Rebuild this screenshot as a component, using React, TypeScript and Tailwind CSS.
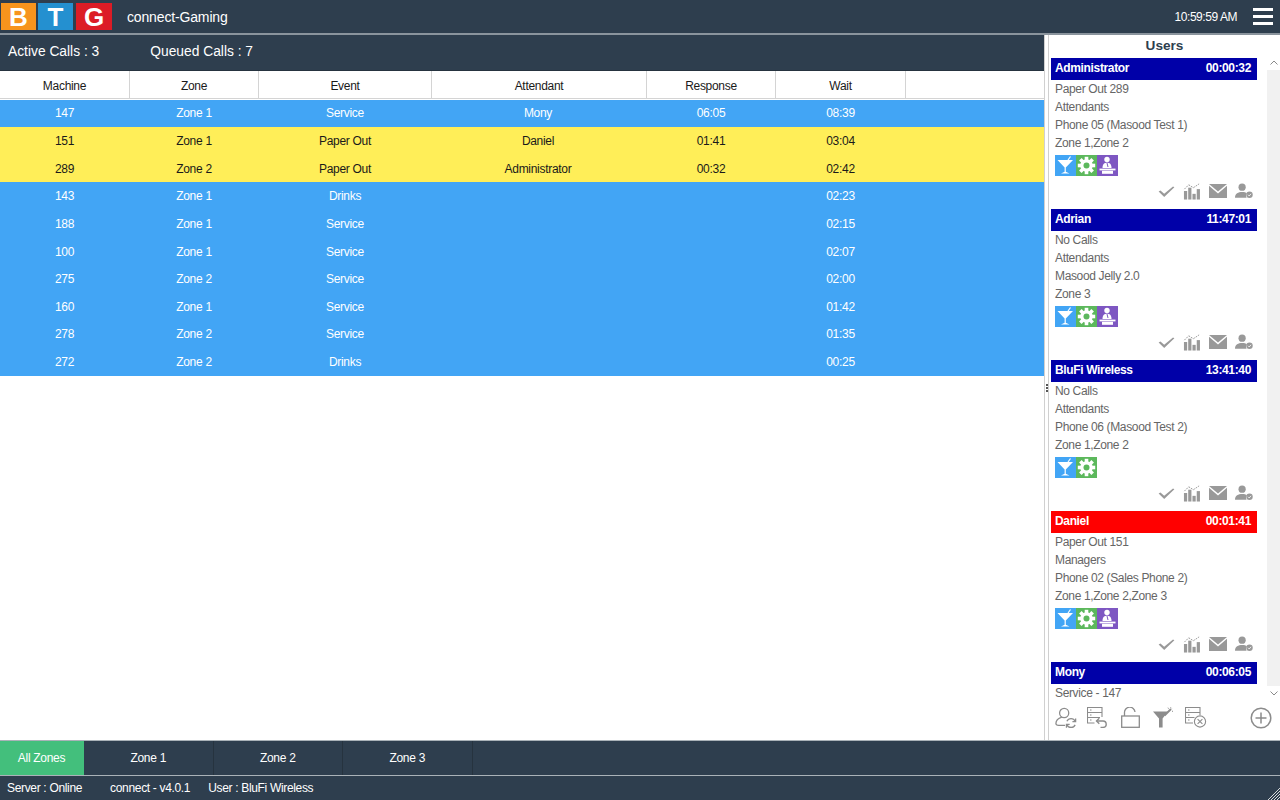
import React from "react";

const columns = [
  { label: "Machine", w: "w-[130px]" },
  { label: "Zone", w: "w-[129px]" },
  { label: "Event", w: "w-[173px]" },
  { label: "Attendant", w: "w-[215px]" },
  { label: "Response", w: "w-[129px]" },
  { label: "Wait", w: "w-[130px]" },
];

const rows = [
  ["147", "Zone 1", "Service", "Mony", "06:05", "08:39", "b"],
  ["151", "Zone 1", "Paper Out", "Daniel", "01:41", "03:04", "y"],
  ["289", "Zone 2", "Paper Out", "Administrator", "00:32", "02:42", "y"],
  ["143", "Zone 1", "Drinks", "", "", "02:23", "b"],
  ["188", "Zone 1", "Service", "", "", "02:15", "b"],
  ["100", "Zone 1", "Service", "", "", "02:07", "b"],
  ["275", "Zone 2", "Service", "", "", "02:00", "b"],
  ["160", "Zone 1", "Service", "", "", "01:42", "b"],
  ["278", "Zone 2", "Service", "", "", "01:35", "b"],
  ["272", "Zone 2", "Drinks", "", "", "00:25", "b"],
];

const users = [
  { name: "Administrator", time: "00:00:32", color: "bg-[#0000a8]", lines: ["Paper Out 289", "Attendants", "Phone 05 (Masood Test 1)", "Zone 1,Zone 2"], badges: 3 },
  { name: "Adrian", time: "11:47:01", color: "bg-[#0000a8]", lines: ["No Calls", "Attendants", "Masood Jelly 2.0", "Zone 3"], badges: 3 },
  { name: "BluFi Wireless", time: "13:41:40", color: "bg-[#0000a8]", lines: ["No Calls", "Attendants", "Phone 06 (Masood Test 2)", "Zone 1,Zone 2"], badges: 2 },
  { name: "Daniel", time: "00:01:41", color: "bg-[#ff0000]", lines: ["Paper Out 151", "Managers", "Phone 02 (Sales Phone 2)", "Zone 1,Zone 2,Zone 3"], badges: 3 },
  { name: "Mony", time: "00:06:05", color: "bg-[#0000a8]", lines: ["Service - 147"], badges: 0 },
];

function Cocktail() {
  return (
    <svg viewBox="0 0 21 21" className="h-[21px] w-[21px]">
      <path d="M2.5 5 L18 5 L10.8 12.5 L10.8 16.8 L14.5 18.6 L6 18.6 L9.6 16.8 L9.6 12.5 Z" fill="#fff" />
      <path d="M13 5 L15.5 1.5" stroke="#fff" strokeWidth="1.2" />
    </svg>
  );
}

function Gear() {
  const teeth = [0, 45, 90, 135, 180, 225, 270, 315];
  return (
    <svg viewBox="0 0 21 21" className="h-[21px] w-[21px]">
      {teeth.map((a) => (
        <rect key={a} x="8.7" y="1.8" width="3.6" height="4" fill="#fff" transform={`rotate(${a} 10.5 10.5)`} />
      ))}
      <circle cx="10.5" cy="10.5" r="6.2" fill="#fff" />
      <circle cx="10.5" cy="10.5" r="3" fill="#5cb85c" />
    </svg>
  );
}

function Attendant() {
  return (
    <svg viewBox="0 0 21 21" className="h-[21px] w-[21px]">
      <circle cx="10" cy="4.5" r="2.7" fill="#fff" />
      <path d="M5.5 13 C5.5 9 7.5 7.8 10 7.8 C12.5 7.8 14.5 9 14.5 13 Z" fill="#fff" />
      <path d="M10 8 L11 12" stroke="#7e57c2" strokeWidth="1" />
      <rect x="2.5" y="13.6" width="16" height="1.8" fill="#fff" />
      <rect x="5" y="15.8" width="11" height="3" fill="#fff" />
    </svg>
  );
}

function CheckIcon() {
  return (
    <svg viewBox="0 0 18 14" className="h-[13px] w-[17px]">
      <path d="M0.5 7 L2.5 5.8 L6.5 9.3 L16 1.5 L17.5 2.3 L6.5 13 Z" fill="#999999" />
    </svg>
  );
}

function ChartIcon() {
  return (
    <svg viewBox="0 0 19 18" className="h-[18px] w-[18px]">
      <path d="M1.5 7 L6 2.5 L11 5.5 L17 1.5" stroke="#999999" strokeWidth="1" strokeDasharray="2 1" fill="none" />
      <rect x="1" y="9" width="3.4" height="9" fill="#999999" />
      <rect x="5.5" y="5.5" width="3.4" height="12.5" fill="#999999" />
      <rect x="10" y="12" width="3.4" height="6" fill="#999999" />
      <rect x="14.5" y="7" width="3.4" height="11" fill="#999999" />
    </svg>
  );
}

function MailIcon() {
  return (
    <svg viewBox="0 0 18 14" className="h-[14px] w-[18px]">
      <path d="M0 0 H18 L9 7.5 Z" fill="#999999" />
      <path d="M0 1.8 L9 9.5 L18 1.8 V14 H0 Z" fill="#999999" />
    </svg>
  );
}

function UserCheckIcon() {
  return (
    <svg viewBox="0 0 19 16" className="h-[16px] w-[18px]">
      <circle cx="7.5" cy="4" r="3.8" fill="#999999" />
      <path d="M0 15 C0 10.5 3.5 9 7.5 9 C10 9 11.5 9.5 12.5 10.3 C11.3 12 11.5 14 12.3 15 Z" fill="#999999" />
      <circle cx="15.3" cy="12" r="3.4" fill="#999999" />
      <path d="M13.8 12 L15 13.2 L16.9 11" stroke="#fff" strokeWidth="0.9" fill="none" />
    </svg>
  );
}

function UserSync() {
  return (
    <svg viewBox="0 0 24 24" className="h-[22px] w-[22px]" fill="none" stroke="#8c8c8c" strokeWidth="1.4">
      <circle cx="10" cy="6.5" r="5" />
      <path d="M7.5 11 C3 12.5 1 15 1 18 C1 19.5 2 20 4 20 H11" />
      <path d="M22 15.5 A5 5 0 0 0 13 15.5" />
      <path d="M13 19.5 A5 5 0 0 0 22 19.5" />
      <path d="M22.5 12.5 V16 H19" />
      <path d="M12.5 22.5 V19 H16" />
    </svg>
  );
}

function ServerUndo() {
  return (
    <svg viewBox="0 0 22 21" className="h-[21px] w-[22px]" fill="none" stroke="#8c8c8c" strokeWidth="1.1">
      <path d="M7.5 16 H0.5 V0.5 H15 V10" />
      <path d="M0.5 5.5 H15 M0.5 10.5 H13" />
      <path d="M3 3 H4.5 M3 8 H4.5 M3 13 H4.5" />
      <path d="M9.5 14 H16 A3.2 3.2 0 0 1 16 20.4 H13.5" strokeWidth="1.4" />
      <path d="M12.3 11.2 L9.5 14 L12.3 16.8" strokeWidth="1.4" />
    </svg>
  );
}

function ServerCancel() {
  return (
    <svg viewBox="0 0 22 21" className="h-[21px] w-[22px]" fill="none" stroke="#8c8c8c" strokeWidth="1.1">
      <path d="M8 16 H0.5 V0.5 H15 V8" />
      <path d="M0.5 5.5 H15 M0.5 10.5 H9.5" />
      <path d="M3 3 H4.5 M3 8 H4.5 M3 13 H4.5" />
      <circle cx="15" cy="14.5" r="5.6" />
      <path d="M12.6 12.1 L17.4 16.9 M17.4 12.1 L12.6 16.9" />
    </svg>
  );
}

function Unlock() {
  return (
    <svg viewBox="0 0 19 21" className="h-[21px] w-[19px]" fill="none" stroke="#8c8c8c" strokeWidth="1.3">
      <rect x="0.7" y="9" width="17.6" height="11.3" />
      <path d="M3.5 9 V5.8 A5.2 5.2 0 0 1 14 5" />
    </svg>
  );
}

function FunnelWand() {
  return (
    <svg viewBox="0 0 20 21" className="h-[21px] w-[20px]">
      <path d="M0 4.5 H15 L9.6 11.5 V20.5 H6 V11.5 Z" fill="#8c8c8c" />
      <path d="M11.5 8.5 L18 2" stroke="#8c8c8c" strokeWidth="2" />
      <path d="M17.5 0.3 L18.5 1.3 M15 0.7 L15.5 1.7 M19 4 L20 4.5" stroke="#8c8c8c" strokeWidth="1" />
    </svg>
  );
}

function PlusCircle() {
  return (
    <svg viewBox="0 0 22 22" className="h-[22px] w-[22px]" fill="none" stroke="#8c8c8c" strokeWidth="1.5">
      <circle cx="11" cy="11" r="9.8" />
      <path d="M11 5.5 V16.5 M5.5 11 H16.5" />
    </svg>
  );
}

function Chevron({ up }: { up?: boolean }) {
  return (
    <svg viewBox="0 0 8 5" className="h-[5px] w-[8px]" fill="none" stroke="#8a8a8a" strokeWidth="1">
      <path d={up ? "M0.5 4.5 L4 1 L7.5 4.5" : "M0.5 0.5 L4 4 L7.5 0.5"} />
    </svg>
  );
}

function UserCard({ u }: { u: (typeof users)[number] }) {
  return (
    <div className="h-[151px] shrink-0">
      <div className={`flex h-[22px] items-center justify-between pb-[2px] pl-[4px] pr-[6px] text-[12px] font-bold tracking-[-0.35px] text-white ${u.color}`}>
        <span>{u.name}</span>
        <span>{u.time}</span>
      </div>
      <div className="flex flex-col pl-[4px] text-[12px] leading-[18px] tracking-[-0.35px] text-[#666666]">
        {u.lines.map((l, i) => (
          <div key={i} className="h-[18px]">{l}</div>
        ))}
      </div>
      {u.badges > 0 && (
        <>
          <div className="ml-[4px] mt-[3px] flex h-[21px]">
            <div className="bg-[#42a5f5]"><Cocktail /></div>
            <div className="bg-[#5cb85c]"><Gear /></div>
            {u.badges > 2 && <div className="bg-[#7e57c2]"><Attendant /></div>}
          </div>
          <div className="mr-[4px] mt-[6px] flex h-[18px] items-center justify-end gap-[8px]">
            <CheckIcon />
            <ChartIcon />
            <MailIcon />
            <UserCheckIcon />
          </div>
        </>
      )}
    </div>
  );
}

export default function App() {
  return (
    <div className="flex h-[800px] w-[1280px] flex-col overflow-hidden bg-white font-['Liberation_Sans',Arial,sans-serif]">
      <header className="flex h-[35px] shrink-0 items-center border-b-2 border-[#8a949d] bg-[#2e3e4e] text-white">
        <div className="ml-[1px] flex h-[27px] items-stretch">
          <div className="flex w-[35px] items-center justify-center bg-[#f7941d] text-[26px] font-black leading-none">B</div>
          <div className="ml-[2px] flex w-[35px] items-center justify-center bg-[#2490d0] text-[26px] font-black leading-none">T</div>
          <div className="ml-[3px] flex w-[36px] items-center justify-center bg-[#dc1c26] text-[26px] font-black leading-none">G</div>
        </div>
        <div className="ml-[15px] pt-[2px] text-[14px] tracking-[-0.15px]">connect-Gaming</div>
        <div className="ml-auto pt-[1px] text-[12px] tracking-[-0.45px]">10:59:59 AM</div>
        <div className="ml-[16px] mr-[7px] flex w-[20px] flex-col gap-[4px]">
          <div className="h-[3px] bg-white" />
          <div className="h-[3px] bg-white" />
          <div className="h-[3px] bg-white" />
        </div>
      </header>

      <main className="flex min-h-0 flex-1">
        <section className="flex w-[1044px] shrink-0 flex-col">
          <div className="flex h-[36px] shrink-0 items-center gap-[51px] border-b border-[#26333f] bg-[#2e3e4e] pl-[8px] text-[13.8px] text-white">
            <span>Active Calls : 3</span>
            <span>Queued Calls : 7</span>
          </div>
          <div className="flex h-[28px] shrink-0 border-b border-[#d4d4d4] bg-white pt-[3px] text-[12px] tracking-[-0.3px] text-[#1a1a1a]">
            {columns.map((c) => (
              <div key={c.label} className={`flex -mt-[3px] items-center justify-center border-r border-[#d4d4d4] pt-[3px] ${c.w}`}>
                {c.label}
              </div>
            ))}
          </div>
          <div className="pt-[0.5px]">
            {rows.map((r) => (
              <div
                key={r[0]}
                className={`flex h-[27.65px] items-center text-[12px] tracking-[-0.3px] ${r[6] === "y" ? "bg-[#ffee58] text-[#1a1a1a]" : "bg-[#42a5f5] text-white"}`}
              >
                {columns.map((c, i) => (
                  <div key={c.label} className={`text-center ${c.w} ${i === 3 ? "pr-[3px]" : "pr-[1px]"}`}>{r[i]}</div>
                ))}
              </div>
            ))}
          </div>
        </section>

        <div className="flex w-[5px] shrink-0 flex-col items-center justify-center gap-[1px] border-x border-[#d0d0d0] bg-white">
          <div className="h-[2px] w-[2px] bg-[#555]" />
          <div className="h-[2px] w-[2px] bg-[#555]" />
          <div className="h-[2px] w-[2px] bg-[#555]" />
        </div>

        <aside className="flex min-w-0 flex-1 flex-col">
          <div className="h-[23px] shrink-0 text-center text-[13.6px] font-bold leading-[21px] text-[#2e3e4e]">Users</div>
          <div className="flex min-h-0 flex-1">
            <div className="ml-[2px] flex w-[206px] shrink-0 flex-col overflow-hidden">
              {users.map((u) => (
                <UserCard key={u.name} u={u} />
              ))}
            </div>
            <div className="ml-[10px] flex w-[13px] shrink-0 flex-col">
              <div className="flex h-[12px] items-center justify-center pb-[3px]"><Chevron up /></div>
              <div className="flex-1 bg-[#f1f1f1]" />
              <div className="flex h-[14px] items-center justify-center"><Chevron /></div>
            </div>
          </div>
          <div className="flex h-[40px] shrink-0 items-center pb-[5px] pl-[6px] pr-[8px]">
            <UserSync />
            <div className="ml-[10px]"><ServerUndo /></div>
            <div className="ml-[12px]"><Unlock /></div>
            <div className="ml-[13px]"><FunnelWand /></div>
            <div className="ml-[12px]"><ServerCancel /></div>
            <div className="ml-auto"><PlusCircle /></div>
          </div>
        </aside>
      </main>

      <nav className="flex h-[36px] shrink-0 border-y border-[#aab2b8] bg-[#2e3e4e] text-[12px] tracking-[-0.3px] text-white">
        <div className="flex w-[84px] items-center justify-center pr-[1px] bg-[#43bf7c]">All Zones</div>
        {["Zone 1", "Zone 2", "Zone 3"].map((z) => (
          <div key={z} className="flex w-[129.5px] items-center justify-center border-r border-[#26333f]">{z}</div>
        ))}
      </nav>

      <footer className="relative flex h-[24px] shrink-0 items-center bg-[#2e3e4e] pl-[7px] text-[12px] tracking-[-0.33px] text-white">
        <span>Server : Online</span>
        <span className="ml-[28px]">connect - v4.0.1</span>
        <span className="ml-[18px]">User : BluFi Wireless</span>
        <svg viewBox="0 0 12 12" className="absolute bottom-0 right-0 h-[12px] w-[12px]" stroke="#d5d9dc" strokeWidth="1">
          <path d="M0 12 L12 0 M3 12 L12 3 M6 12 L12 6 M9 12 L12 9" />
        </svg>
      </footer>
    </div>
  );
}
